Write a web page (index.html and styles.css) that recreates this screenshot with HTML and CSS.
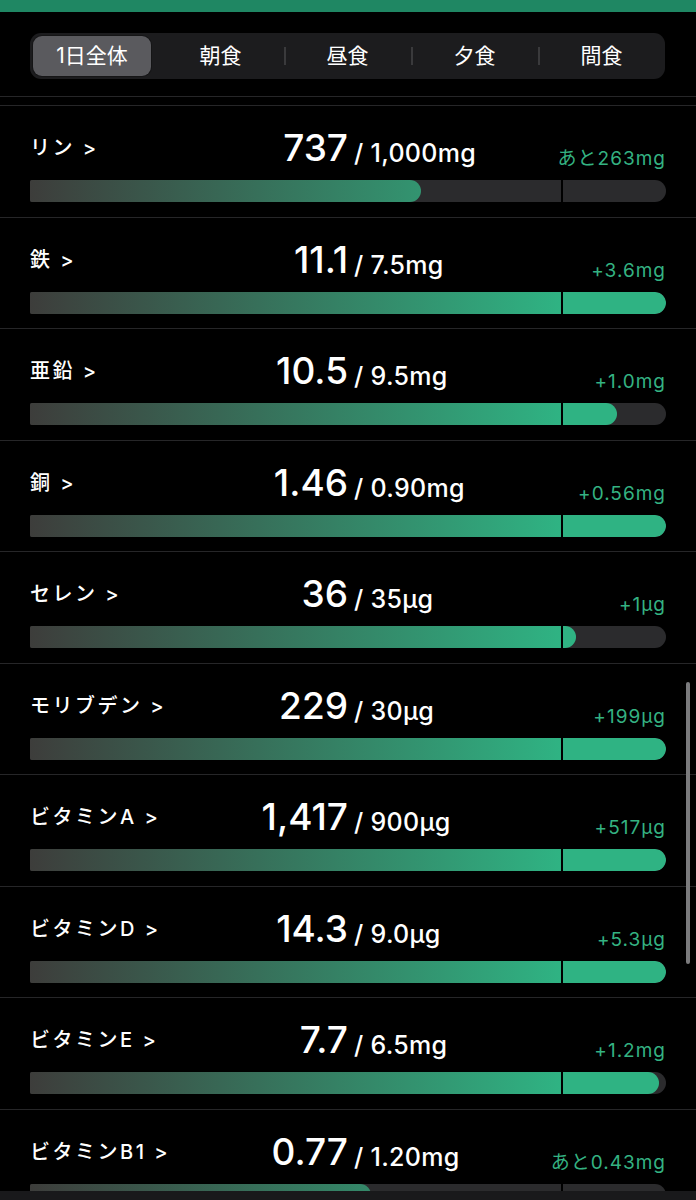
FILE: index.html
```html
<!DOCTYPE html>
<html lang="ja">
<head>
    <meta charset="UTF-8">
    <meta name="viewport" content="width=device-width, initial-scale=1.0">
    <title>栄養素</title>
    <link rel="stylesheet" href="styles.css">
</head>
<body>
    <div class="page">
        <div class="top-bar"></div>

        <!-- Meal tabs -->
        <div class="header">
            <div class="tabs">
                <div class="tab active">1日全体</div>
                <div class="tab">朝食</div>
                <div class="tab sep">昼食</div>
                <div class="tab sep">夕食</div>
                <div class="tab sep">間食</div>
            </div>
        </div>

        <!-- Nutrient rows (fill width = value / goal * 531px, max 636px) -->
        <div class="list">
            <div class="row">
                <div class="row-head">
                    <div class="half left"><span class="label">リン &gt;</span><span class="num">737</span></div>
                    <div class="half right"><span class="goal">/ 1,000mg</span><span class="remain">あと263mg</span></div>
                </div>
                <div class="track"><div class="fill" style="width: 391px"></div><div class="mark"></div></div>
            </div>
            <div class="row">
                <div class="row-head">
                    <div class="half left"><span class="label">鉄 &gt;</span><span class="num">11.1</span></div>
                    <div class="half right"><span class="goal">/ 7.5mg</span><span class="remain">+3.6mg</span></div>
                </div>
                <div class="track"><div class="fill" style="width: 636px"></div><div class="mark"></div></div>
            </div>
            <div class="row">
                <div class="row-head">
                    <div class="half left"><span class="label">亜鉛 &gt;</span><span class="num">10.5</span></div>
                    <div class="half right"><span class="goal">/ 9.5mg</span><span class="remain">+1.0mg</span></div>
                </div>
                <div class="track"><div class="fill" style="width: 587px"></div><div class="mark"></div></div>
            </div>
            <div class="row">
                <div class="row-head">
                    <div class="half left"><span class="label">銅 &gt;</span><span class="num">1.46</span></div>
                    <div class="half right"><span class="goal">/ 0.90mg</span><span class="remain">+0.56mg</span></div>
                </div>
                <div class="track"><div class="fill" style="width: 636px"></div><div class="mark"></div></div>
            </div>
            <div class="row">
                <div class="row-head">
                    <div class="half left"><span class="label">セレン &gt;</span><span class="num">36</span></div>
                    <div class="half right"><span class="goal">/ 35µg</span><span class="remain">+1μg</span></div>
                </div>
                <div class="track"><div class="fill" style="width: 546px"></div><div class="mark"></div></div>
            </div>
            <div class="row">
                <div class="row-head">
                    <div class="half left"><span class="label">モリブデン &gt;</span><span class="num">229</span></div>
                    <div class="half right"><span class="goal">/ 30µg</span><span class="remain">+199μg</span></div>
                </div>
                <div class="track"><div class="fill" style="width: 636px"></div><div class="mark"></div></div>
            </div>
            <div class="row">
                <div class="row-head">
                    <div class="half left"><span class="label">ビタミンA &gt;</span><span class="num">1,417</span></div>
                    <div class="half right"><span class="goal">/ 900µg</span><span class="remain">+517μg</span></div>
                </div>
                <div class="track"><div class="fill" style="width: 636px"></div><div class="mark"></div></div>
            </div>
            <div class="row">
                <div class="row-head">
                    <div class="half left"><span class="label">ビタミンD &gt;</span><span class="num">14.3</span></div>
                    <div class="half right"><span class="goal">/ 9.0µg</span><span class="remain">+5.3μg</span></div>
                </div>
                <div class="track"><div class="fill" style="width: 636px"></div><div class="mark"></div></div>
            </div>
            <div class="row">
                <div class="row-head">
                    <div class="half left"><span class="label">ビタミンE &gt;</span><span class="num">7.7</span></div>
                    <div class="half right"><span class="goal">/ 6.5mg</span><span class="remain">+1.2mg</span></div>
                </div>
                <div class="track"><div class="fill" style="width: 629px"></div><div class="mark"></div></div>
            </div>
            <div class="row">
                <div class="row-head">
                    <div class="half left"><span class="label">ビタミンB1 &gt;</span><span class="num">0.77</span></div>
                    <div class="half right"><span class="goal">/ 1.20mg</span><span class="remain">あと0.43mg</span></div>
                </div>
                <div class="track"><div class="fill" style="width: 341px"></div><div class="mark"></div></div>
            </div>
        </div>

        <div class="scrollbar"></div>
    </div>
    <div class="bottom-bar"></div>
</body>
</html>
```

FILE: styles.css
```css
body {
    margin: 0;
    background: #000;
    color: #fff;
    font-family: Inter, "Noto Sans CJK JP", sans-serif;
}

.page {
    height: 1191px;
    overflow: hidden;
    position: relative;
}

.top-bar {
    height: 12px;
    background: #1f8763;
}

/* Meal tabs */
.header {
    height: 85px;
    padding-top: 21px;
    box-sizing: border-box;
    border-bottom: 1px solid #262628;
    margin-bottom: 8px;
}

.tabs {
    margin: 0 31px 0 30px;
    height: 46px;
    background: #1c1c1e;
    border-radius: 11px;
    display: grid;
    grid-template-columns: repeat(5, 1fr);
    align-items: center;
}

.tab {
    position: relative;
    height: 40px;
    line-height: 40px;
    text-align: center;
    font-size: 21px;
}

.tab.active {
    background: #5a5a5e;
    border-radius: 9px;
    margin: 0 6px 0 3px;
    box-shadow: 0 0 0 1px rgba(0, 0, 0, 0.25);
}

.tab.sep::before {
    content: "";
    position: absolute;
    left: 0;
    top: 11px;
    height: 18px;
    width: 1.5px;
    background: #3a3a3c;
}

/* Rows */
.list {
    border-top: 1px solid #262628;
}

.row {
    height: 111.5px;
    box-sizing: border-box;
    border-bottom: 1px solid #262628;
    padding: 0 30px;
}

.row-head {
    height: 63px;
    display: grid;
    grid-template-columns: 1fr 1fr;
    align-items: end;
}

.half {
    display: flex;
    justify-content: space-between;
    align-items: flex-end;
}

.label {
    font-size: 20px;
    line-height: 20px;
    font-weight: 500;
    letter-spacing: 2.5px;
    margin-bottom: 11px;
}

.num {
    font-size: 37px;
    line-height: 37px;
    font-weight: 500;
    margin-bottom: 3px;
}

.goal {
    font-size: 25px;
    line-height: 25px;
    font-weight: 500;
    letter-spacing: 0.3px;
    padding-left: 6px;
    margin-bottom: 3px;
}

.remain {
    font-size: 19px;
    line-height: 19px;
    letter-spacing: 1px;
    color: #34b282;
    margin-bottom: 1px;
}

.track {
    position: relative;
    margin-top: 11px;
    height: 22px;
    background: #2b2b2d;
    border-radius: 2px 11px 11px 2px;
    overflow: hidden;
}

.fill {
    height: 100%;
    border-radius: 0 11px 11px 0;
    background: linear-gradient(to right, #3d3d3b 0, #2fb383 531px);
}

.mark {
    position: absolute;
    left: 531px;
    top: 0;
    width: 2px;
    height: 100%;
    background: #000;
}

.scrollbar {
    position: absolute;
    right: 6px;
    top: 682px;
    width: 4px;
    height: 282px;
    border-radius: 2px;
    background: #7b7b7d;
}

.bottom-bar {
    height: 9px;
    background: #19191b;
}
```
